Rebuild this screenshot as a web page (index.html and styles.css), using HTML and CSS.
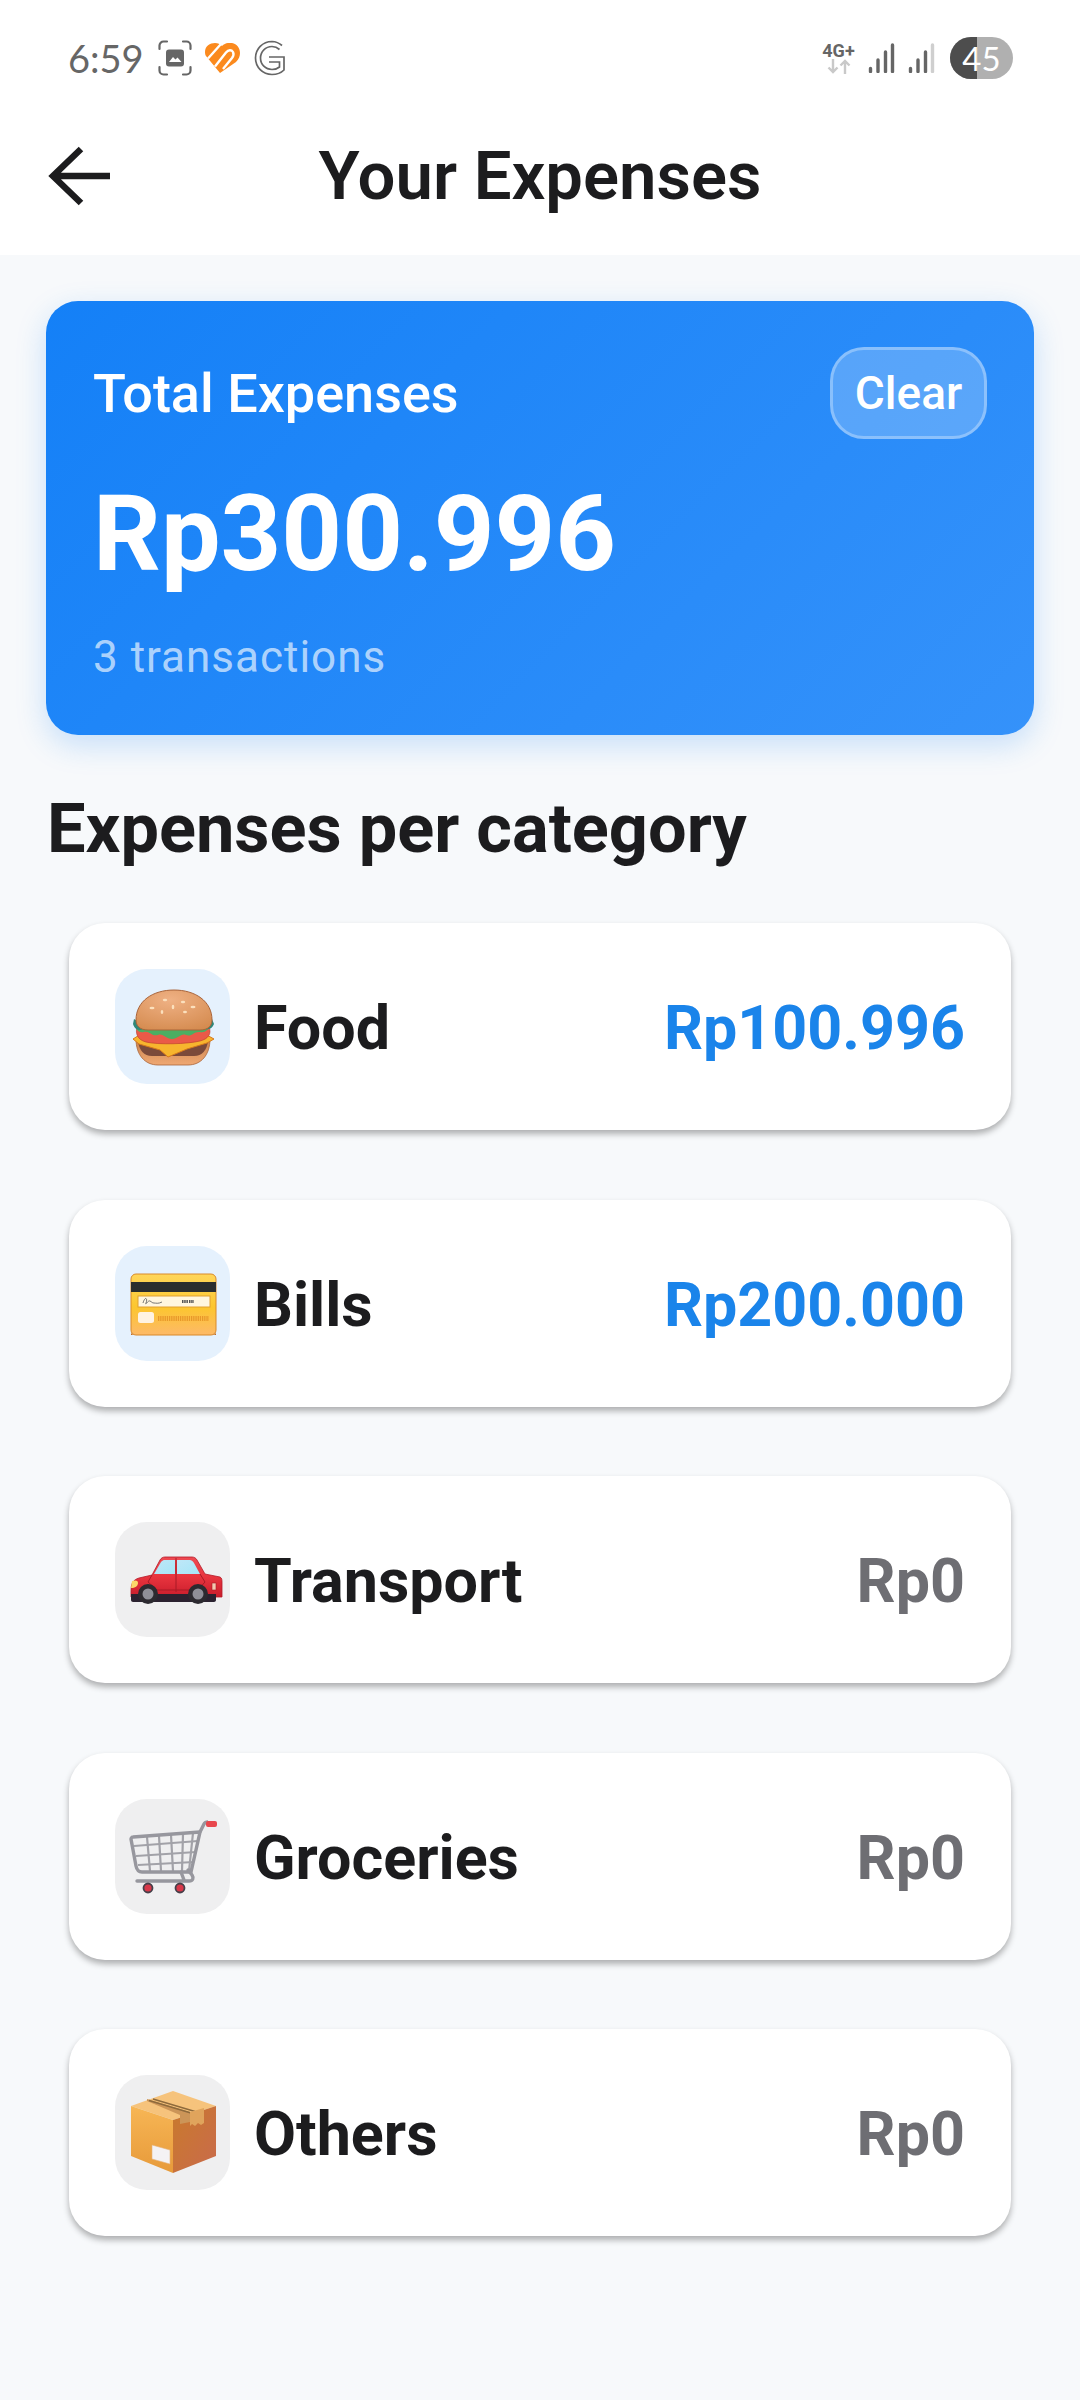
FILE: index.html
```html
<!DOCTYPE html>
<html lang="en">
<head>
<meta charset="utf-8">
<title>Your Expenses</title>
<link rel="stylesheet" href="styles.css">
</head>
<body>
<header class="top">
  <div class="status">
    <div class="status-left">
      <span class="time">6:59</span>
      <svg class="ic-shot" viewBox="0 0 34 36" fill="none"><path d="M1.500 9V5.500a4 4 0 0 1 4-4H9M25 1.500h3.500a4 4 0 0 1 4 4V9M1.500 27v3.500a4 4 0 0 0 4 4H9M25 34.500h3.500a4 4 0 0 0 4-4V27" stroke="#666" stroke-width="2.200" stroke-linecap="round"/><rect x="8" y="9.500" width="18" height="17" rx="3" fill="#666"/><path d="M11 22l4-5 2.500 2.500 2-2 4 4.500z" fill="#fff"/></svg>
      <svg class="ic-heart" viewBox="0 0 35 30"><path d="M0 9C0 3 5 0 10 0c3 0 5 1 7 3 3-3 7-3.500 10-3 5 1 8 5 8 10 0 3-1 6-4 9L15 30 1 13C.3 12 0 10.500 0 9z" fill="#fb8a1e"/><path d="M3 15.500L16 1M10 23.500L21 9.500c2.500-3 5.500-3 7-.5 1 2 .5 4-1 6L18 26" fill="none" stroke="#fff" stroke-width="2.400"/></svg>
      <svg class="ic-g" viewBox="0 0 32 36" fill="none" stroke="#666" stroke-width="1.700"><path d="M28 5.500A16.500 16.500 0 0 0 18 1.500C8.500 1.500 1.500 9 1.500 18S8.500 34.500 18 34.500c5 0 9-1.500 12-4.500V17H15"/><path d="M25.500 9.500A11.500 11.500 0 0 0 18 6.500C11.500 6.500 6.500 11.500 6.500 18S11.500 29.500 18 29.500c3 0 5.500-.8 7.500-2.500v-5H15"/></svg>
    </div>
    <div class="status-right">
      <div class="net">
        <span class="net-label">4G+</span>
        <svg class="net-arrows" viewBox="0 0 24 15" fill="none" stroke="#c9c9c9" stroke-width="2.400"><path d="M6 0v13M1.500 8.500L6 13l4.500-4.500M18 15V2M13.500 6.500L18 2l4.500 4.500"/></svg>
      </div>
      <svg class="ic-signal" viewBox="0 0 26 30" stroke="#666" stroke-width="3.400" stroke-linecap="round"><path d="M2 25.500v3M9.500 17v11.500M17 9v19.500M24 2v26.500"/></svg>
      <svg class="ic-signal" viewBox="0 0 26 30" stroke="#666" stroke-width="3.400" stroke-linecap="round"><path d="M2 25.500v3M9.500 17v11.500M17 9v19.500"/><path d="M24 2v26.500" stroke="#cfcfcf"/></svg>
      <div class="battery"><span class="battery-level"></span><span class="battery-text">45</span></div>
    </div>
  </div>
  <div class="appbar">
    <svg class="ic-back" viewBox="0 0 62 60" fill="none" stroke="#1c1c1e" stroke-width="6.500"><path d="M33 3L5 30l28 27M5 30h57"/></svg>
    <h1 class="title">Your Expenses</h1>
  </div>
</header>

<main class="content">
  <section class="hero">
    <div class="hero-top">
      <span class="hero-label">Total Expenses</span>
      <button class="clear">Clear</button>
    </div>
    <div class="hero-amount">Rp300.996</div>
    <div class="hero-count">3 transactions</div>
  </section>

  <h2 class="section-title">Expenses per category</h2>

  <ul class="list">
    <li class="row">
      <div class="thumb thumb-on">
        <svg class="emoji" viewBox="0 0 115 115">
          <defs>
            <radialGradient id="bun" cx=".45" cy=".25" r=".85"><stop offset="0" stop-color="#efb184"/><stop offset="1" stop-color="#d48a4e"/></radialGradient>
            <linearGradient id="bunb" x1="0" y1="0" x2="0" y2="1"><stop offset="0" stop-color="#c9814c"/><stop offset="1" stop-color="#efa873"/></linearGradient>
          </defs>
          <path d="M21 70h74c0 16-9 26-22 26H43C30 96 21 86 21 70z" fill="url(#bunb)" stroke="#a9643a" stroke-width=".8"/>
          <path d="M23 72h70c-1 9-6 15-14 15H37c-8 0-13-6-14-15z" fill="#7b4a3a"/>
          <path d="M18 70l8-5h64l9 5-7 4-20 6-19 8-8-7-21-6z" fill="#f7b52e" stroke="#d8791c" stroke-width="1"/>
          <path d="M22 58h72c3 7-1 12-9 14-12 3-42 4-54 1-8-2-11-8-9-15z" fill="#ea5a48" stroke="#b8372b" stroke-width=".6"/>
          <path d="M20 56c1 5 4 8 9 7 5-2 8 5 14 3 5-2 8 4 14 4s9-6 14-4c6 2 8-4 14-3 5 1 8-2 11-7l-1-4H20z" fill="#4cae62"/>
          <path d="M18 55c2 6 6 7 10 5 6-3 55-3 61 0 4 1 8 0 10-5l-2-5-5 3H24l-5-3z" fill="#2f8778"/>
          <path d="M21 51C21 32 38 21 59 21s38 11 38 30c0 6-4 10-12 10H33c-8 0-12-4-12-10z" fill="url(#bun)" stroke="#a9643a" stroke-width="1"/>
          <g fill="#fbe0bd"><ellipse cx="37" cy="39" rx="2.500" ry="1.300"/><ellipse cx="50" cy="31" rx="2.200" ry="1.300"/><ellipse cx="47" cy="43" rx="1.300" ry="2"/><ellipse cx="58" cy="38" rx="1.300" ry="2.300"/><ellipse cx="68" cy="33" rx="2.200" ry="1.300"/><ellipse cx="70" cy="43" rx="2" ry="1.300"/><ellipse cx="78" cy="38" rx="2.500" ry="1.300"/></g>
        </svg>
      </div>
      <span class="row-name">Food</span>
      <span class="row-amount row-amount-on">Rp100.996</span>
    </li>
    <li class="row">
      <div class="thumb thumb-on">
        <svg class="emoji" viewBox="0 0 115 115">
          <defs><linearGradient id="cardg" x1="0" y1="0" x2="0" y2="1"><stop offset="0" stop-color="#ffd65a"/><stop offset=".55" stop-color="#fcc62f"/><stop offset="1" stop-color="#fdb968"/></linearGradient></defs>
          <rect x="16" y="28" width="85" height="61" rx="5" fill="url(#cardg)" stroke="#d98a2a" stroke-width="1"/>
          <path d="M16 89h85v-3c0 2-2 3-4 3H20c-2 0-4-1-4-3z" fill="#c66d1e"/>
          <rect x="16" y="36" width="85" height="10" fill="#2a2d2e"/>
          <rect x="23" y="50" width="72" height="11" fill="#fff6df" stroke="#e0a030" stroke-width="1"/>
          <path d="M28 57c2-7 5-5 3 0-1 3 2-3 4-2s2 2 4 2 4 1 8-1" fill="none" stroke="#555" stroke-width=".8"/>
          <path d="M67 55.500h6m1 0h5" stroke="#555" stroke-width="3" stroke-dasharray="1.500 .7" fill="none"/>
          <rect x="23" y="66" width="16" height="11" rx="2.500" fill="#fff3e2"/>
          <path d="M43 72.500h51" stroke="#e8982a" stroke-width="5" stroke-dasharray="1.300 .9" fill="none"/>
        </svg>
      </div>
      <span class="row-name">Bills</span>
      <span class="row-amount row-amount-on">Rp200.000</span>
    </li>
    <li class="row">
      <div class="thumb">
        <svg class="emoji" viewBox="0 0 115 115">
          <defs>
            <linearGradient id="carg" x1="0" y1="0" x2="0" y2="1"><stop offset="0" stop-color="#ee4a52"/><stop offset=".5" stop-color="#e8343e"/><stop offset="1" stop-color="#c91d2c"/></linearGradient>
            <linearGradient id="glass" x1="0" y1="0" x2="1" y2="1"><stop offset="0" stop-color="#bfe7f8"/><stop offset="1" stop-color="#a6e6f7"/></linearGradient>
          </defs>
          <path d="M16 70c0-9 2-12 8-14l13-3 8-15c1-2 3-3 5-3h27c2 0 4 1 5 3l8 14 15 3c2 1 2 3 2 6v14H16z" fill="url(#carg)" stroke="#b41b28" stroke-width=".8"/>
          <path d="M39 52l7-12c1-1 2-2 3-2h11v14z" fill="url(#glass)"/>
          <path d="M62 38h13c1 0 3 1 4 3l6 11H62z" fill="url(#glass)"/>
          <path d="M61 36v34M37 53l-4 7 9 8h32M85 52l5 8-8 9" fill="none" stroke="#a81a26" stroke-width="1"/>
          <path d="M16 72h85v6c0 1-1 2-2 2H18c-1 0-2-1-2-2z" fill="#2b2230"/>
          <path d="M17 59c3-1 6-1 6 2s-3 5-7 5z" fill="#fbd86a"/>
          <rect x="97" y="61" width="4" height="7" fill="#f3c8b0" stroke="#a81a26" stroke-width=".6"/>
          <circle cx="33" cy="72" r="10" fill="#2c2a30"/><circle cx="33" cy="72" r="5.500" fill="#8f8f98"/>
          <circle cx="83" cy="72" r="10" fill="#2c2a30"/><circle cx="83" cy="72" r="5.500" fill="#8f8f98"/>
        </svg>
      </div>
      <span class="row-name">Transport</span>
      <span class="row-amount">Rp0</span>
    </li>
    <li class="row">
      <div class="thumb">
        <svg class="emoji" viewBox="0 0 115 115">
          <g fill="none" stroke="#a2a2a8">
            <path d="M19 47l64-5M21 57l60-4M23 66l56-3" stroke-width="2"/>
            <path d="M32 38l3 34M44 37l2 35M56 36l2 36M68 35l-1 37M78 34l-4 38" stroke-width="2.200"/>
            <path d="M85 33L18 38c-1 0-2 1-2 2l5 27c1 5 3 6 6 6h49l9-40z" stroke="#97979e" stroke-width="3.400"/>
            <path d="M85 33l4-8c1-2 2-2 4-2" stroke="#97979e" stroke-width="3.400"/>
            <path d="M22 82h52c4 0 5-3 3-6l-4-5M66 73l3 8" stroke="#97979e" stroke-width="3.400" stroke-linecap="round"/>
          </g>
          <rect x="91" y="22" width="11" height="6" rx="2" fill="#e8474d"/>
          <circle cx="33" cy="89" r="4.500" fill="#d9384a" stroke="#47404a" stroke-width="1.800"/>
          <circle cx="65" cy="89" r="4.500" fill="#d9384a" stroke="#47404a" stroke-width="1.800"/>
        </svg>
      </div>
      <span class="row-name">Groceries</span>
      <span class="row-amount">Rp0</span>
    </li>
    <li class="row">
      <div class="thumb">
        <svg class="emoji" viewBox="0 0 115 115">
          <defs>
            <linearGradient id="boxl" x1="0" y1="0" x2="0" y2="1"><stop offset="0" stop-color="#f7b655"/><stop offset="1" stop-color="#e79a3a"/></linearGradient>
            <linearGradient id="boxr" x1="0" y1="0" x2="1" y2="1"><stop offset="0" stop-color="#c97a2c"/><stop offset="1" stop-color="#c96a4c"/></linearGradient>
          </defs>
          <path d="M58 16l43 15-43 14-42-14z" fill="#f6c37c"/>
          <path d="M16 31l42 14v53L16 81z" fill="url(#boxl)"/>
          <path d="M58 45l43-14v50L58 98z" fill="url(#boxr)"/>
          <path d="M32 24l43 13v10l-10 2V40L32 26z" fill="#cc9558"/>
          <path d="M34 25.500L76 38M38 24L80 36.500" stroke="#8e6a3c" stroke-width="1.600" fill="none"/>
          <path d="M75 37l14-4v15l-3 2-3-2-3 3-3-2-2 2z" fill="#e0a45c"/>
          <path d="M37 70l18 5v14l-18-5z" fill="#f4f2f4" stroke="#e6b27a" stroke-width=".6"/>
        </svg>
      </div>
      <span class="row-name">Others</span>
      <span class="row-amount">Rp0</span>
    </li>
  </ul>
</main>
</body>
</html>
```

FILE: styles.css
```css
* { box-sizing: border-box; }
html, body { margin: 0; padding: 0; }
body {
  width: 1080px;
  height: 2400px;
  overflow: hidden;
  background: #f7f9fb;
  font-family: Roboto, "Liberation Sans", sans-serif;
  color: #1c1c1e;
}
.top { background: #fff; height: 255px; }
.status {
  height: 116px;
  padding: 0 67px 0 68px;
  display: flex;
  align-items: center;
  justify-content: space-between;
}
.status-left { display: flex; align-items: center; }
.time { font-family: Lato, sans-serif; font-size: 38px; color: #666; width: 90px; }
.ic-shot { width: 34px; height: 36px; }
.ic-heart { width: 35px; height: 30px; margin-left: 13px; }
.ic-g { width: 32px; height: 36px; margin-left: 14px; }
.status-right { display: flex; align-items: center; }
.net { display: flex; flex-direction: column; align-items: center; width: 33px; }
.net-label { font-size: 18px; font-weight: 700; color: #666; line-height: 17px; white-space: nowrap; }
.net-arrows { width: 24px; height: 15px; }
.ic-signal { width: 27px; height: 30px; margin-left: 13px; }
.battery {
  position: relative;
  width: 63px;
  height: 42px;
  margin-left: 15px;
  border-radius: 21px;
  background: #b0b0b0;
  overflow: hidden;
  display: flex;
  align-items: center;
  justify-content: center;
}
.battery-level { position: absolute; left: 0; top: 0; bottom: 0; width: 27px; background: #4d4d4d; }
.battery-text { position: relative; font-family: Lato, sans-serif; font-size: 33px; color: #fff; }
.appbar { height: 120px; display: flex; align-items: center; padding: 0 110px 0 48px; }
.ic-back { width: 62px; height: 60px; }
.title { flex: 1; margin: 0; text-align: center; font-size: 67px; font-weight: 600; }
.content { padding: 46px 46px 0; }
.hero {
  height: 434px;
  padding: 46px 47px;
  border-radius: 32px;
  background: linear-gradient(135deg, #1480f7, #3592fa);
  box-shadow: 0 10px 30px rgba(26, 132, 247, .22);
  color: #fff;
}
.hero-top { display: flex; justify-content: space-between; align-items: center; }
.hero-label { font-size: 54px; font-weight: 500; }
.clear {
  width: 157px;
  height: 92px;
  padding: 0;
  border: 3px solid rgba(255, 255, 255, .3);
  border-radius: 34px;
  background: rgba(255, 255, 255, .22);
  color: #fff;
  font: 500 46px Roboto, sans-serif;
}
.hero-amount { font-size: 106px; font-weight: 700; line-height: 118px; margin-top: 36px; }
.hero-count { font-size: 44px; color: rgba(255, 255, 255, .65); margin-top: 38px; letter-spacing: 1px; }
.section-title { margin: 55px 0 0 1px; font-size: 68.500px; font-weight: 700; line-height: 77px; }
.list { list-style: none; margin: 56px 23px 0; padding: 0; display: flex; flex-direction: column; gap: 69.500px; }
.row {
  height: 207px;
  padding: 46px;
  display: flex;
  align-items: center;
  background: #fff;
  border-radius: 36px;
  box-shadow: 0 4px 6px rgba(0, 0, 0, .3);
}
.thumb { width: 115px; height: 115px; border-radius: 32px; background: #efeff0; flex: none; }
.thumb-on { background: #e5f1fd; }
.emoji { display: block; width: 115px; height: 115px; }
.row-name { flex: 1; margin-left: 24px; padding-top: 3px; font-size: 61px; font-weight: 700; }
.row-amount { padding-top: 3px; font-size: 61px; font-weight: 700; color: #6e6e73; }
.row-amount-on { color: #1a84ea; }
```
